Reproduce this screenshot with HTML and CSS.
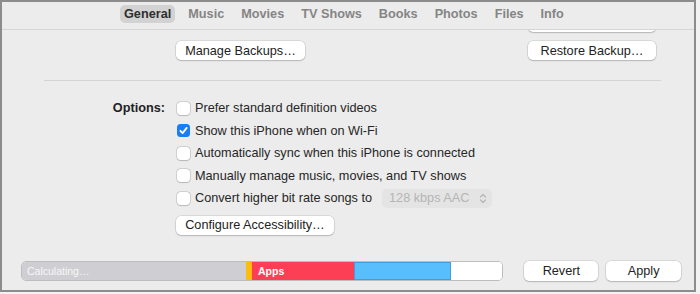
FILE: index.html
```html
<!DOCTYPE html>
<html>
<head>
<meta charset="utf-8">
<link rel="stylesheet" href="styles.css">
</head>
<body>
<div class="window">
  <nav class="tabs">
    <span class="tab active">General</span>
    <span class="tab">Music</span>
    <span class="tab">Movies</span>
    <span class="tab">TV Shows</span>
    <span class="tab">Books</span>
    <span class="tab">Photos</span>
    <span class="tab">Files</span>
    <span class="tab">Info</span>
  </nav>
  <main class="content">
    <div class="btn-row cut">
      <span class="btn-spacer"></span>
      <span class="btn restore"></span>
    </div>
    <div class="btn-row">
      <button class="btn manage">Manage Backups…</button>
      <button class="btn restore">Restore Backup…</button>
    </div>
    <hr class="divider">
    <section class="options">
      <div class="opt-label">Options:</div>
      <div class="opt-list">
        <label class="opt"><span class="cb"></span>Prefer standard definition videos</label>
        <label class="opt"><span class="cb checked"><svg viewBox="0 0 13 13" width="13" height="13"><path d="M3.4 6.8 L5.6 9.1 L9.7 3.9" fill="none" stroke="#fff" stroke-width="1.8" stroke-linecap="round" stroke-linejoin="round"/></svg></span>Show this iPhone when on Wi-Fi</label>
        <label class="opt"><span class="cb"></span>Automatically sync when this iPhone is connected</label>
        <label class="opt"><span class="cb"></span>Manually manage music, movies, and TV shows</label>
        <label class="opt"><span class="cb"></span>Convert higher bit rate songs to
          <span class="select">128 kbps AAC<svg class="chev" viewBox="0 0 8 11" width="8" height="11"><path d="M1.5 4 L4 1.5 L6.5 4 M1.5 7 L4 9.5 L6.5 7" fill="none" stroke="#b6b6b6" stroke-width="1.2" stroke-linecap="round" stroke-linejoin="round"/></svg></span>
        </label>
        <button class="btn access">Configure Accessibility…</button>
      </div>
    </section>
  </main>
  <footer class="footer">
    <div class="storage">
      <span class="seg seg-other" style="width:224px">Calculating…</span>
      <span class="seg seg-yellow" style="width:6px"></span>
      <span class="seg seg-apps" style="width:102px">Apps</span>
      <span class="seg seg-blue" style="width:97px"></span>
      <span class="seg seg-free"></span>
    </div>
    <button class="btn foot-btn revert">Revert</button>
    <button class="btn foot-btn">Apply</button>
  </footer>
</div>
</body>
</html>
```

FILE: styles.css
```css
html, body {
  margin: 0;
  padding: 0;
  background: #f2f2f2;
}
body {
  width: 700px;
  height: 294px;
  overflow: hidden;
  font-family: "Liberation Sans", Arial, sans-serif;
  font-size: 12.7px;
  color: #262626;
}
.window {
  box-sizing: border-box;
  width: 696px;
  height: 292px;
  border: 2px solid #8c8c8c;
  background: #ececec;
  display: flex;
  flex-direction: column;
}
.tabs {
  height: 27px;
  flex: none;
  display: flex;
  align-items: flex-start;
  padding-left: 118px;
  gap: 9px;
  border-bottom: 1px solid #d6d6d6;
  background: #ececec;
  position: relative;
  z-index: 2;
  box-sizing: content-box;
}
.tab {
  margin-top: 3px;
  height: 18px;
  line-height: 18px;
  padding: 0 4px;
  border-radius: 5px;
  font-weight: bold;
  color: #858585;
}
.tab.active {
  background: #d2d2d2;
  color: #2e2e2e;
}
.content {
  flex: 1;
  overflow: hidden;
  position: relative;
  z-index: 1;
}
.btn {
  font-family: inherit;
  font-size: 12.7px;
  color: #222;
  background: #fff;
  border: none;
  border-radius: 5px;
  height: 19px;
  padding: 0;
  box-shadow: 0 0 0 0.5px rgba(0,0,0,0.16), 0 1px 1.5px rgba(0,0,0,0.16);
  text-align: center;
  display: inline-block;
}
.btn-row {
  display: flex;
  justify-content: space-between;
  padding-left: 174px;
  padding-right: 38px;
  margin-top: 9px;
}
.btn-row.cut {
  margin-top: -17px;
}
.manage { width: 129px; }
.restore { width: 128px; }
.divider {
  border: none;
  height: 1px;
  background: #d4d4d4;
  margin: 20px 33px 0 42px;
}
.options {
  display: grid;
  grid-template-columns: 163px 1fr;
  column-gap: 11px;
  margin-top: 16px;
}
.opt-label {
  text-align: right;
  font-weight: bold;
  line-height: 22.5px;
  color: #222;
}
.opt-list {
  display: flex;
  flex-direction: column;
  align-items: flex-start;
}
.opt {
  height: 22.5px;
  display: flex;
  align-items: center;
  white-space: nowrap;
}
.cb {
  box-sizing: border-box;
  width: 13px;
  height: 13px;
  margin: 0 5px 0 1px;
  border-radius: 3.5px;
  background: #fff;
  box-shadow: 0 0 0 0.5px rgba(0,0,0,0.22), 0 0.5px 1px rgba(0,0,0,0.12);
  display: inline-flex;
}
.cb.checked {
  background: #1c7cf4;
  box-shadow: none;
}
.select {
  box-sizing: border-box;
  margin-left: 10px;
  width: 110px;
  height: 19px;
  border-radius: 5px;
  background: #e4e4e4;
  color: #b4b4b4;
  display: inline-flex;
  align-items: center;
  justify-content: space-between;
  padding: 0 5px 0 7px;
}
.access {
  width: 158px;
  margin-top: 6px;
  margin-left: 0;
}
.footer {
  flex: none;
  display: flex;
  align-items: center;
  padding: 0 13px 9px 19px;
  gap: 8px;
}
.storage {
  box-sizing: border-box;
  width: 484px;
  height: 20px;
  margin-right: 13px;
  display: flex;
  border-radius: 5px;
  overflow: hidden;
  border: 1px solid #bdbdbd;
  background: #fff;
}
.seg {
  box-sizing: border-box;
  height: 100%;
  display: flex;
  align-items: center;
  font-size: 10.5px;
  color: #fff;
  white-space: nowrap;
}
.seg-other {
  background: #cfced3;
  color: #f7f7f7;
  padding-left: 5px;
}
.seg-yellow { background: #fcbd10; }
.seg-apps {
  background: #fd3f55;
  padding-left: 6px;
  font-weight: bold;
}
.seg-blue {
  background: #58bffc;
  border: 1px solid #3f9fd9;
}
.seg-free {
  flex: 1;
  background: #fff;
}
.foot-btn {
  width: 75px;
  height: 20px;
}
.foot-btn.revert {
  width: 74px;
}
```
